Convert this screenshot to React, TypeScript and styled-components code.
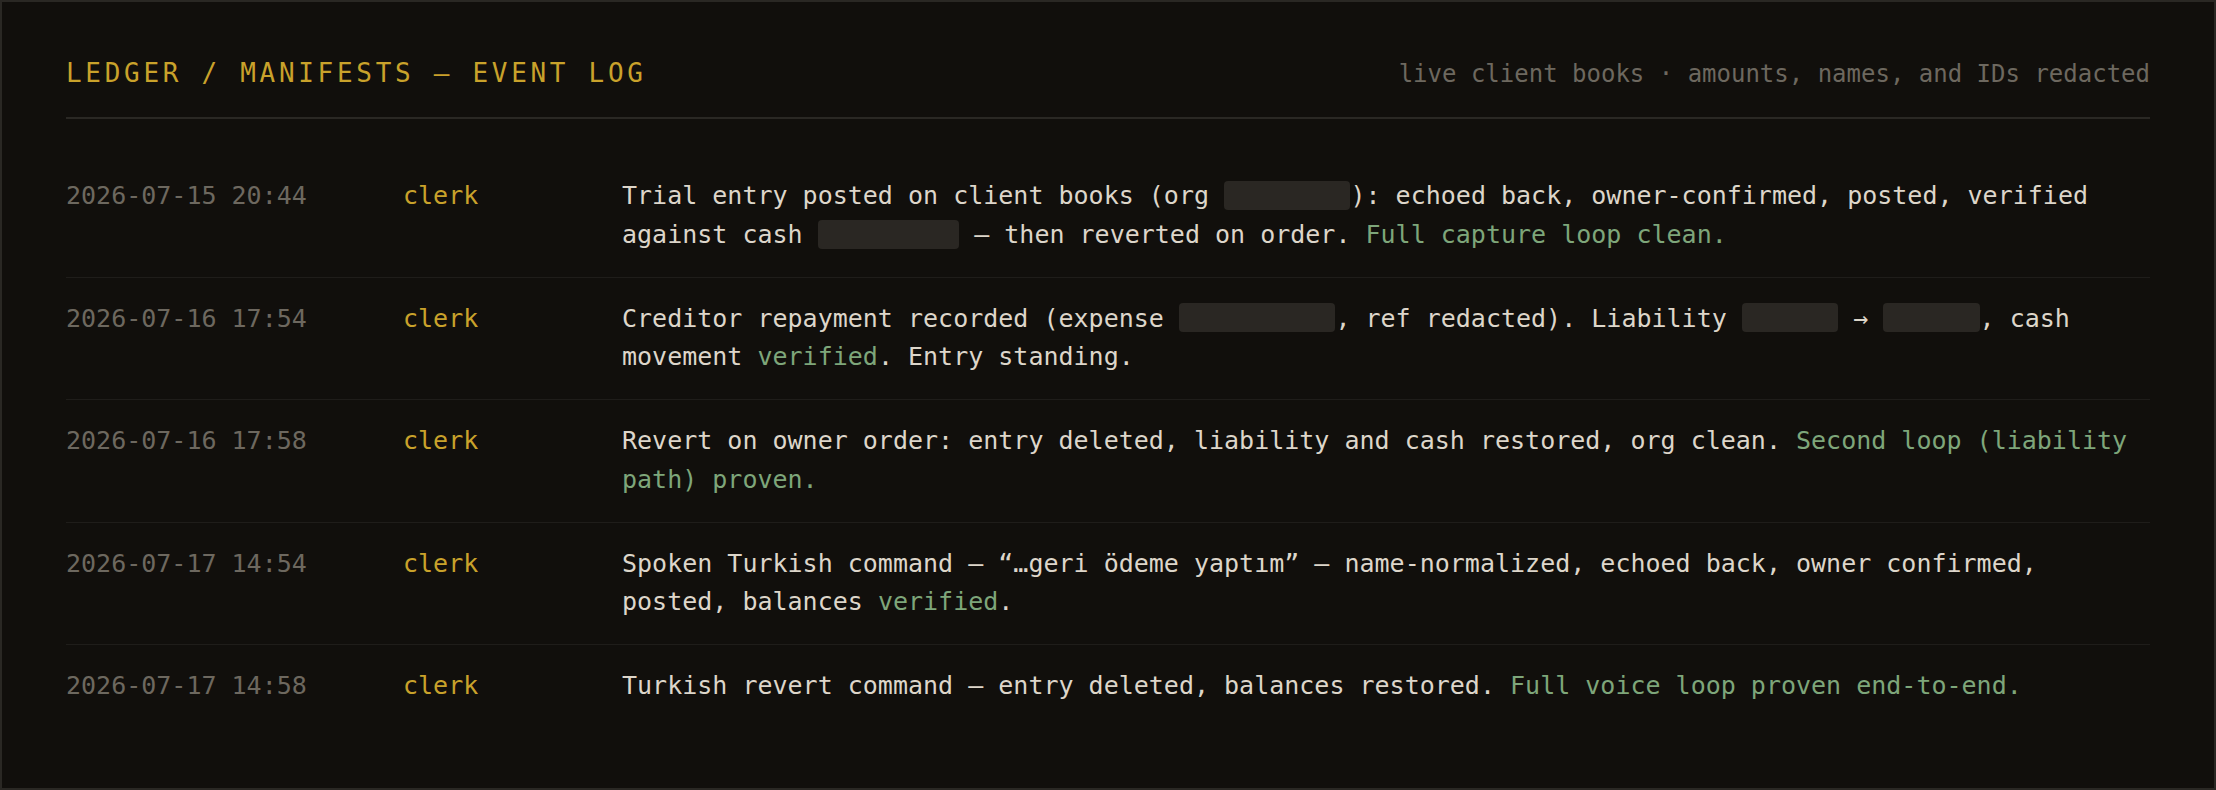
import React from "react";
import styled, { createGlobalStyle } from "styled-components";

const Global = createGlobalStyle`
  html, body { margin: 0; padding: 0; background: #110f0c; }
  body { font-family: "DejaVu Sans Mono", "Liberation Mono", monospace; }
  * { box-sizing: border-box; }
`;

const Panel = styled.main`
  min-height: 100vh;
  border: 2px solid #2a2824;
  background: #110f0c;
  padding: 56px 64px 40px 64px;
  display: flex;
  flex-direction: column;
`;

const Header = styled.header`
  display: flex;
  justify-content: space-between;
  align-items: baseline;
  padding-bottom: 28px;
  border-bottom: 2px solid #2a2824;
`;

const Title = styled.h1`
  margin: 0;
  font-size: 26px;
  line-height: 30px;
  font-weight: 400;
  letter-spacing: 3.7px;
  color: #c9a22b;
`;

const Subtitle = styled.div`
  font-size: 24px;
  line-height: 30px;
  color: #6d685f;
`;

const List = styled.ol`
  list-style: none;
  margin: 36px 0 0 0;
  padding: 0;
`;

const Row = styled.li<{ $last?: boolean }>`
  display: grid;
  grid-template-columns: 337px 219px 1fr;
  align-items: start;
  padding: 22px 0;
  border-bottom: ${(p) => (p.$last ? "none" : "1px solid #1f1d1a")};
  font-size: 25px;
  line-height: 38.75px;
`;

const Time = styled.span`
  color: #6d685f;
`;

const Agent = styled.span`
  color: #c9a22b;
`;

const Message = styled.p`
  margin: 0;
  color: #ddd6ca;
`;

const Good = styled.span`
  color: #7ea67a;
`;

const Redacted = styled.span<{ $chars: number }>`
  display: inline-block;
  width: calc(${(p) => p.$chars}ch + 6px);
  height: 1.164em;
  vertical-align: -0.236em;
  background: #2a2723;
  border-radius: 4px;
`;

type Part = string | { r: number } | { g: string };

const R = (n: number): Part => ({ r: n });
const G = (s: string): Part => ({ g: s });

const entries: { time: string; agent: string; parts: Part[] }[] = [
  {
    time: "2026-07-15 20:44",
    agent: "clerk",
    parts: [
      "Trial entry posted on client books (org ",
      R(8),
      "): echoed back, owner-confirmed, posted, verified against cash ",
      R(9),
      " — then reverted on order. ",
      G("Full capture loop clean."),
    ],
  },
  {
    time: "2026-07-16 17:54",
    agent: "clerk",
    parts: [
      "Creditor repayment recorded (expense ",
      R(10),
      ", ref redacted). Liability ",
      R(6),
      " → ",
      R(6),
      ", cash movement ",
      G("verified"),
      ". Entry standing.",
    ],
  },
  {
    time: "2026-07-16 17:58",
    agent: "clerk",
    parts: [
      "Revert on owner order: entry deleted, liability and cash restored, org clean. ",
      G("Second loop (liability path) proven."),
    ],
  },
  {
    time: "2026-07-17 14:54",
    agent: "clerk",
    parts: [
      "Spoken Turkish command — “…geri ödeme yaptım” — name-normalized, echoed back, owner confirmed, posted, balances ",
      G("verified"),
      ".",
    ],
  },
  {
    time: "2026-07-17 14:58",
    agent: "clerk",
    parts: [
      "Turkish revert command — entry deleted, balances restored. ",
      G("Full voice loop proven end-to-end."),
    ],
  },
];

function renderPart(p: Part, i: number) {
  if (typeof p === "string") return <React.Fragment key={i}>{p}</React.Fragment>;
  if ("r" in p) return <Redacted key={i} $chars={p.r} aria-label="redacted" />;
  return <Good key={i}>{p.g}</Good>;
}

export default function App() {
  return (
    <>
      <Global />
      <Panel>
        <Header>
          <Title>LEDGER / MANIFESTS — EVENT LOG</Title>
          <Subtitle>live client books · amounts, names, and IDs redacted</Subtitle>
        </Header>
        <List>
          {entries.map((e, i) => (
            <Row key={i} $last={i === entries.length - 1}>
              <Time>{e.time}</Time>
              <Agent>{e.agent}</Agent>
              <Message>{e.parts.map(renderPart)}</Message>
            </Row>
          ))}
        </List>
      </Panel>
    </>
  );
}
